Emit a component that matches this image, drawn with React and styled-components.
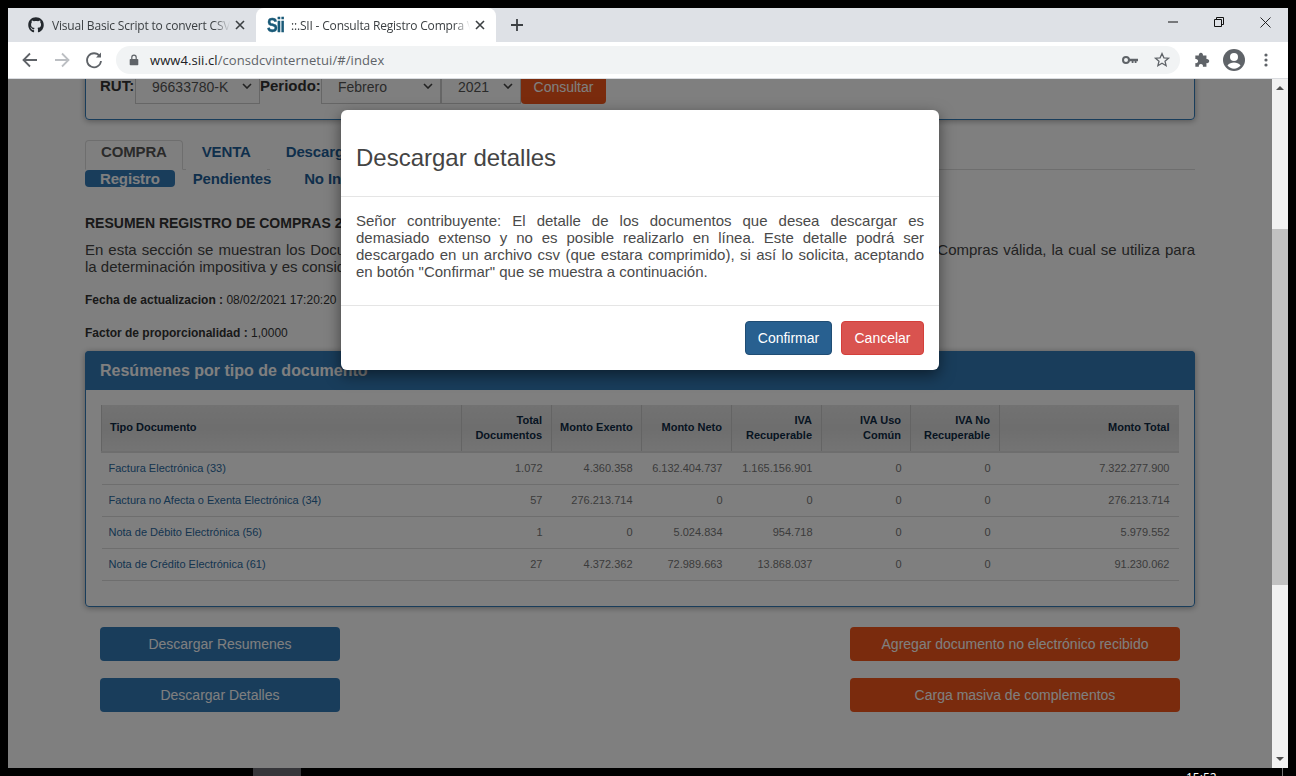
import React from 'react';
import styled, { createGlobalStyle } from 'styled-components';
import { FaGithub } from 'react-icons/fa';

const GlobalStyle = createGlobalStyle`
  html, body {
    margin: 0;
    padding: 0;
    background: #000;
    overflow: hidden;
  }
  * { box-sizing: border-box; }
`;

const Screen = styled.div`
  width: 1296px;
  height: 776px;
  background: #000;
  display: flex;
  flex-direction: column;
  overflow: hidden;
  font-family: "Liberation Sans", Arial, sans-serif;
`;

const Browser = styled.div`
  margin: 8px 8px 0;
  height: 760px;
  display: flex;
  flex-direction: column;
`;

const TabStrip = styled.div`
  height: 34px;
  background: #dee1e6;
  display: flex;
  align-items: flex-end;
  padding-left: 8px;
  flex: none;
`;

const Tab = styled.div`
  width: 240px;
  height: 34px;
  display: flex;
  align-items: center;
  padding: 0 4px 0 12px;
  border-radius: 8px 8px 0 0;
  background: ${(p) => (p.$active ? '#fff' : 'transparent')};
  font-family: "Open Sans", "Noto Sans", sans-serif;
  font-size: 12px;
  letter-spacing: -0.18px;
  color: #3c4043;
`;

const TabTitle = styled.span`
  margin-left: 8px;
  flex: 1;
  white-space: nowrap;
  overflow: hidden;
  -webkit-mask-image: linear-gradient(to right, #000 90%, transparent 99%);
  mask-image: linear-gradient(to right, #000 90%, transparent 99%);
`;

const TabClose = styled.svg`
  width: 16px;
  height: 16px;
  flex: none;
  margin-right: 4px;
`;

const SiiLogo = styled.span`
  width: 16px;
  margin-left: -1px;
  font-family: "Liberation Sans", sans-serif;
  font-weight: 700;
  font-size: 20px;
  line-height: 16px;
  letter-spacing: -1px;
  color: #1a5a78;
  -webkit-text-stroke: .4px #1a5a78;
  flex: none;
  transform: scaleX(.8);
  transform-origin: left center;
`;

const NewTab = styled.svg`
  width: 16px;
  height: 16px;
  margin: 0 0 9px 13px;
`;

const WindowControls = styled.div`
  margin-left: auto;
  display: flex;
  align-self: flex-start;
`;

const WindowButton = styled.div`
  width: 46px;
  height: 28px;
  display: flex;
  align-items: center;
  justify-content: center;
`;

const Toolbar = styled.div`
  height: 37px;
  flex: none;
  background: #fff;
  border-bottom: 1px solid #dadce0;
  display: flex;
  align-items: center;
  padding: 0 5px 1px 12px;
`;

const NavButton = styled.svg`
  width: 20px;
  height: 20px;
  margin-right: ${(p) => p.$gap || 0}px;
  flex: none;
`;

const Omnibox = styled.div`
  margin-left: 12px;
  width: 1064px;
  height: 28px;
  border-radius: 14px;
  background: #f1f3f4;
  display: flex;
  align-items: center;
  padding: 0 9px 0 12px;
`;

const Url = styled.span`
  margin-left: 10px;
  flex: 1;
  font-family: "Open Sans", "Noto Sans", sans-serif;
  font-size: 13px;
  letter-spacing: .08px;
  color: #5f6368;
  b { font-weight: 400; color: #202124; }
`;

const ToolIcons = styled.div`
  display: flex;
  align-items: center;
  gap: 15px;
`;

const RightIcons = styled.div`
  display: flex;
  align-items: center;
  margin-left: 12px;
`;

const Viewport = styled.div`
  flex: 1;
  min-height: 0;
  display: flex;
  position: relative;
`;

const PageArea = styled.div`
  width: 1264px;
  position: relative;
  overflow: hidden;
  background: #fff;
`;

const Page = styled.div`
  padding: 0 77px 0 77px;
  color: #333;
`;

const FormPanel = styled.div`
  margin-top: -12px;
  height: 53px;
  border: 1px solid #337ab7;
  border-radius: 4px;
  padding: 12px 14px 0;
  display: flex;
  align-items: flex-start;
  box-shadow: 0 1px 6px rgba(0, 0, 0, .35);
`;

const FormLabel = styled.span`
  width: ${(p) => p.$w}px;
  font-size: 15px;
  font-weight: 700;
  line-height: 20px;
  margin-top: -4px;
  white-space: nowrap;
`;

const Select = styled.div`
  width: ${(p) => p.$w}px;
  height: 32px;
  margin-top: -8px;
  border: 1px solid #ccc;
  padding: 6px 0 0 16px;
  font-size: 14px;
  line-height: 16px;
  color: #555;
  position: relative;
  svg {
    position: absolute;
    right: 7px;
    top: 10px;
  }
`;

const SubmitButton = styled.div`
  width: 85px;
  height: 32px;
  margin-top: -8px;
  background: #f4571a;
  border-radius: 0 0 4px 4px;
  padding-top: 7px;
  font-size: 14px;
  line-height: 16px;
  color: #fff;
  text-align: center;
`;

const TabBar = styled.div`
  margin-top: 20px;
  height: 30px;
  border-bottom: 1px solid #ddd;
  display: flex;
`;

const TabLink = styled.div`
  height: 30px;
  padding: 2px 15px 0;
  margin-right: 3px;
  border: 1px solid ${(p) => (p.$active ? '#ddd' : 'transparent')};
  border-bottom-color: ${(p) => (p.$active ? '#fff' : 'transparent')};
  border-radius: 4px 4px 0 0;
  background: #fff;
  font-size: 15px;
  font-weight: 700;
  line-height: 17px;
  letter-spacing: -0.15px;
  color: ${(p) => (p.$active ? '#555' : '#1f5f99')};
`;

const SubTabs = styled.div`
  display: flex;
  height: 17px;
`;

const SubTab = styled.div`
  padding: 0 15px;
  margin-right: 3px;
  border-radius: 4px;
  background: ${(p) => (p.$active ? '#337ab7' : 'transparent')};
  font-size: 15px;
  font-weight: 700;
  line-height: 18px;
  letter-spacing: -0.15px;
  color: ${(p) => (p.$active ? '#fff' : '#1f5f99')};
`;

const SectionTitle = styled.div`
  margin-top: 28px;
  font-size: 14px;
  font-weight: 700;
  line-height: 17px;
  color: #333;
`;

const Intro = styled.div`
  margin-top: 9px;
  font-size: 15px;
  line-height: 17px;
  color: #444;
  text-align: justify;
  text-align-last: justify;
`;

const IntroLast = styled.div`
  font-size: 15px;
  line-height: 17px;
  color: #444;
`;

const Meta = styled.div`
  margin-top: ${(p) => p.$top}px;
  font-size: 12px;
  line-height: 17px;
  color: #333;
  b { font-weight: 700; }
`;

const SummaryPanel = styled.section`
  margin-top: 9px;
  height: 256px;
  border: 1px solid #337ab7;
  border-radius: 4px;
  box-shadow: 0 1px 6px rgba(0, 0, 0, .35);
`;

const SummaryHeader = styled.h3`
  margin: -1px -1px 0;
  height: 39px;
  padding: 10px 15px 0;
  border-radius: 4px 4px 0 0;
  background: #337ab7;
  color: #fff;
  font-size: 16px;
  font-weight: 700;
  line-height: 19px;
`;

const Table = styled.table`
  margin: 15px 0 0 15px;
  width: 1077px;
  border-collapse: collapse;
  table-layout: fixed;
  font-size: 11px;
`;

const HeadCell = styled.th`
  height: 47px;
  padding: 0 9px 1px 8px;
  background: linear-gradient(#e4e4e4, #dcdcdc 50%, #e8e8e8);
  border-left: 1px solid #c8c8c8;
  border-bottom: 2px solid #ddd;
  font-weight: 700;
  line-height: 15px;
  white-space: nowrap;
  text-align: ${(p) => (p.$left ? 'left' : 'right')};
  color: #0e2a44;
`;

const Cell = styled.td`
  height: 32px;
  padding: 0 9px 0 7px;
  border-bottom: 1px solid #ddd;
  text-align: ${(p) => (p.$left ? 'left' : 'right')};
  color: ${(p) => (p.$left ? '#2a6a9f' : '#777')};
  white-space: nowrap;
`;

const ActionRow = styled.div`
  margin-top: ${(p) => p.$top}px;
  padding: 0 15px;
  display: flex;
  justify-content: space-between;
`;

const ActionButton = styled.div`
  width: ${(p) => p.$w}px;
  height: 34px;
  border-radius: 4px;
  background: ${(p) => p.$bg};
  color: #fff;
  font-size: 14px;
  line-height: 34px;
  text-align: center;
`;

const Backdrop = styled.div`
  position: absolute;
  inset: 0;
  background: rgba(0, 0, 0, .5);
  padding-top: 31px;
`;

const Modal = styled.div`
  width: 598px;
  height: 260px;
  margin: 0 auto;
  background: #fff;
  border-radius: 6px;
  box-shadow: 0 5px 15px rgba(0, 0, 0, .5);
  display: flex;
  flex-direction: column;
`;

const ModalHeader = styled.div`
  height: 87px;
  padding: 34px 15px 0;
  border-bottom: 1px solid #e5e5e5;
  font-size: 24px;
  line-height: 28px;
  color: #444;
`;

const ModalBody = styled.div`
  height: 109px;
  padding: 15px 15px 0;
  border-bottom: 1px solid #e5e5e5;
  font-size: 15px;
  line-height: 17px;
  color: #4a4a4a;
  text-align: justify;
`;

const ModalFooter = styled.div`
  display: flex;
  justify-content: flex-end;
  gap: 9px;
  padding: 15px 15px 0;
`;

const ModalButton = styled.div`
  width: ${(p) => p.$w}px;
  height: 34px;
  border-radius: 4px;
  border: 1px solid ${(p) => p.$border};
  background: ${(p) => p.$bg};
  color: #fff;
  font-size: 14px;
  line-height: 32px;
  text-align: center;
`;

const Scrollbar = styled.div`
  width: 16px;
  background: #f1f1f1;
  display: flex;
  flex-direction: column;
  align-items: center;
  justify-content: space-between;
  padding: 7px 0;
  position: relative;
`;

const ScrollThumb = styled.div`
  position: absolute;
  top: 150px;
  left: 0;
  width: 16px;
  height: 356px;
  background: #c1c1c1;
`;

const Arrow = styled.div`
  width: 0;
  height: 0;
  border-left: 4px solid transparent;
  border-right: 4px solid transparent;
  ${(p) => (p.$down ? 'border-top: 4px solid #505050;' : 'border-bottom: 4px solid #505050;')}
`;

const TaskBar = styled.div`
  height: 8px;
  flex: none;
  display: flex;
  overflow: hidden;
`;

const TaskItem = styled.div`
  margin-left: 253px;
  width: 48px;
  height: 8px;
  background: #36363a;
`;

const Clock = styled.div`
  margin-left: 885px;
  width: 97px;
  font-family: "Open Sans", sans-serif;
  font-size: 12px;
  line-height: 20px;
  color: #fff;
  border-right: 1px solid #777;
`;

const columns = [360, 90, 90, 90, 90, 89, 89, 179];

const rows = [
  ['Factura Electrónica (33)', '1.072', '4.360.358', '6.132.404.737', '1.165.156.901', '0', '0', '7.322.277.900'],
  ['Factura no Afecta o Exenta Electrónica (34)', '57', '276.213.714', '0', '0', '0', '0', '276.213.714'],
  ['Nota de Débito Electrónica (56)', '1', '0', '5.024.834', '954.718', '0', '0', '5.979.552'],
  ['Nota de Crédito Electrónica (61)', '27', '4.372.362', '72.989.663', '13.868.037', '0', '0', '91.230.062'],
];

const Caret = () => (
  <svg width="10" height="6" viewBox="0 0 10 6">
    <path d="M1 1l4 4 4-4" fill="none" stroke="#444" strokeWidth="1.6" />
  </svg>
);

const CloseIcon = () => (
  <TabClose viewBox="0 0 16 16">
    <path d="M4 4l8 8M12 4l-8 8" stroke="#3c4043" strokeWidth="1.6" />
  </TabClose>
);

const App = () => {
  return (
    <Screen>
      <GlobalStyle />
      <Browser>
        <TabStrip>
          <Tab>
            <FaGithub size={16} color="#24292e" style={{ flex: 'none' }} />
            <TabTitle>Visual Basic Script to convert CSV files to Excel</TabTitle>
            <CloseIcon />
          </Tab>
          <Tab $active>
            <SiiLogo>Sii</SiiLogo>
            <TabTitle>::.SII - Consulta Registro Compra Venta</TabTitle>
            <CloseIcon />
          </Tab>
          <NewTab viewBox="0 0 16 16">
            <path d="M8 2v12M2 8h12" stroke="#3c4043" strokeWidth="1.8" />
          </NewTab>
          <WindowControls>
            <WindowButton>
              <svg width="10" height="10" viewBox="0 0 10 10"><path d="M0 5h10" stroke="#111" strokeWidth="1" /></svg>
            </WindowButton>
            <WindowButton>
              <svg width="10" height="10" viewBox="0 0 10 10"><path d="M.5 2.5h7v7h-7zM2.5 2.5v-2h7v7h-2" fill="none" stroke="#111" /></svg>
            </WindowButton>
            <WindowButton>
              <svg width="11" height="11" viewBox="0 0 11 11"><path d="M.5.5l10 10M10.500.5l-10 10" stroke="#111" strokeWidth=".9" /></svg>
            </WindowButton>
          </WindowControls>
        </TabStrip>
        <Toolbar>
          <NavButton viewBox="0 0 20 20" $gap={12}>
            <path d="M17 10H4M10 3.500L3.500 10l6.500 6.500" fill="none" stroke="#5f6368" strokeWidth="1.8" />
          </NavButton>
          <NavButton viewBox="0 0 20 20" $gap={12}>
            <path d="M3 10h13M10 3.500l6.500 6.500-6.500 6.500" fill="none" stroke="#bcbfc3" strokeWidth="1.8" />
          </NavButton>
          <NavButton viewBox="0 0 20 20">
            <path d="M15.600 6A7 7 0 1 0 17 11" fill="none" stroke="#5f6368" strokeWidth="1.8" />
            <path d="M17 2.500v5h-5z" fill="#5f6368" />
          </NavButton>
          <Omnibox>
            <svg width="12" height="12" viewBox="0 0 12 12">
              <path d="M2.500 5h7a.8.8 0 0 1 .8.8v4.700a.8.8 0 0 1-.8.8h-7a.8.8 0 0 1-.8-.8V5.800a.8.8 0 0 1 .8-.8z" fill="#5f6368" />
              <path d="M3.800 5V3.400a2.200 2.200 0 0 1 4.400 0V5" fill="none" stroke="#5f6368" strokeWidth="1.200" />
            </svg>
            <Url><b>www4.sii.cl</b>/consdcvinternetui/#/index</Url>
            <ToolIcons>
              <svg width="16" height="16" viewBox="0 0 16 16">
                <circle cx="4" cy="8" r="3" fill="none" stroke="#5f6368" strokeWidth="2" />
                <path d="M6.500 6.800H16v2.400h-1.500v1.800h-1.800V9.200h-1.200v1.800H9.700V9.200H6.500z" fill="#5f6368" />
              </svg>
              <svg width="18" height="18" viewBox="0 0 18 18">
                <path d="M9 2.500l1.900 4.300 4.600.4-3.500 3 1.100 4.500L9 12.300l-4.100 2.400 1.100-4.500-3.500-3 4.600-.4z" fill="none" stroke="#5f6368" strokeWidth="1.300" />
              </svg>
            </ToolIcons>
          </Omnibox>
          <RightIcons>
            <svg width="20" height="20" viewBox="0 0 18 18">
              <path d="M3 5h3.200a1.900 1.900 0 1 1 3.600 0H13v3.200a1.900 1.900 0 1 1 0 3.600V15H9.800a1.900 1.900 0 1 0-3.600 0H3v-3.200a1.900 1.900 0 1 0 0-3.600z" fill="#5f6368" />
            </svg>
            <svg width="24" height="24" viewBox="0 0 24 24" style={{ marginLeft: 10 }}>
              <circle cx="12" cy="12" r="11" fill="#5f6368" />
              <circle cx="12" cy="9" r="4" fill="#fff" />
              <path d="M5.500 17.600c1.600-2.200 4-3 6.500-3s4.900.8 6.500 3c-1.600 2-3.900 3.200-6.500 3.200s-4.900-1.200-6.500-3.200z" fill="#fff" />
            </svg>
            <svg width="16" height="18" viewBox="0 0 16 18" style={{ marginLeft: 12 }}>
              <circle cx="8" cy="4" r="1.600" fill="#5f6368" />
              <circle cx="8" cy="9" r="1.600" fill="#5f6368" />
              <circle cx="8" cy="14" r="1.600" fill="#5f6368" />
            </svg>
          </RightIcons>
        </Toolbar>
        <Viewport>
          <PageArea>
            <Page>
              <FormPanel>
                <FormLabel $w={35}>RUT:</FormLabel>
                <Select $w={125}>96633780-K<Caret /></Select>
                <FormLabel $w={61}>Periodo:</FormLabel>
                <Select $w={120}>Febrero<Caret /></Select>
                <Select $w={80}>2021<Caret /></Select>
                <SubmitButton>Consultar</SubmitButton>
              </FormPanel>
              <TabBar>
                <TabLink $active>COMPRA</TabLink>
                <TabLink>VENTA</TabLink>
                <TabLink>Descargas</TabLink>
              </TabBar>
              <SubTabs>
                <SubTab $active>Registro</SubTab>
                <SubTab>Pendientes</SubTab>
                <SubTab>No Incluir</SubTab>
              </SubTabs>
              <SectionTitle>RESUMEN REGISTRO DE COMPRAS 2021-02</SectionTitle>
              <Intro>En esta sección se muestran los Documentos que conforman el Registro de Compras, información que define un Registro de Compras válida, la cual se utiliza para</Intro>
              <IntroLast>la determinación impositiva y es considerada como parte de la contabilidad.</IntroLast>
              <Meta $top={17}><b>Fecha de actualizacion :</b> 08/02/2021 17:20:20</Meta>
              <Meta $top={16}><b>Factor de proporcionalidad :</b> 1,0000</Meta>
              <SummaryPanel>
                <SummaryHeader>Resúmenes por tipo de documento</SummaryHeader>
                <Table>
                  <colgroup>
                    {columns.map((width, i) => <col key={i} width={width} />)}
                  </colgroup>
                  <thead>
                    <tr>
                      <HeadCell $left>Tipo Documento</HeadCell>
                      <HeadCell>Total<br />Documentos</HeadCell>
                      <HeadCell>Monto Exento</HeadCell>
                      <HeadCell>Monto Neto</HeadCell>
                      <HeadCell>IVA<br />Recuperable</HeadCell>
                      <HeadCell>IVA Uso<br />Común</HeadCell>
                      <HeadCell>IVA No<br />Recuperable</HeadCell>
                      <HeadCell>Monto Total</HeadCell>
                    </tr>
                  </thead>
                  <tbody>
                    {rows.map((row) => (
                      <tr key={row[0]}>
                        {row.map((value, i) => <Cell key={i} $left={i === 0}>{value}</Cell>)}
                      </tr>
                    ))}
                  </tbody>
                </Table>
              </SummaryPanel>
              <ActionRow $top={20}>
                <ActionButton $w={240} $bg="#337ab7">Descargar Resumenes</ActionButton>
                <ActionButton $w={330} $bg="#f4571a">Agregar documento no electrónico recibido</ActionButton>
              </ActionRow>
              <ActionRow $top={17}>
                <ActionButton $w={240} $bg="#337ab7">Descargar Detalles</ActionButton>
                <ActionButton $w={330} $bg="#f4571a">Carga masiva de complementos</ActionButton>
              </ActionRow>
            </Page>
            <Backdrop>
              <Modal>
                <ModalHeader>Descargar detalles</ModalHeader>
                <ModalBody>
                  Señor contribuyente: El detalle de los documentos que desea descargar es demasiado extenso y no es posible realizarlo en línea. Este detalle podrá ser descargado en un archivo csv (que estara comprimido), si así lo solicita, aceptando en botón "Confirmar" que se muestra a continuación.
                </ModalBody>
                <ModalFooter>
                  <ModalButton $w={87} $bg="#286090" $border="#204d74">Confirmar</ModalButton>
                  <ModalButton $w={83} $bg="#d9534f" $border="#d43f3a">Cancelar</ModalButton>
                </ModalFooter>
              </Modal>
            </Backdrop>
          </PageArea>
          <Scrollbar>
            <Arrow />
            <ScrollThumb />
            <Arrow $down />
          </Scrollbar>
        </Viewport>
      </Browser>
      <TaskBar>
        <TaskItem />
        <Clock>15:52</Clock>
      </TaskBar>
    </Screen>
  );
};

export default App;
